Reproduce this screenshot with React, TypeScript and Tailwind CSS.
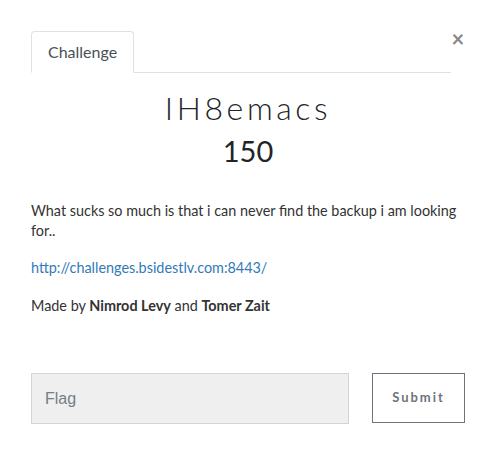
import React from "react";

export default function App() {
  return (
    <div className="w-[495px] h-[473px] bg-white" style={{ fontFamily: "Lato, 'Open Sans', sans-serif" }}>
      <div className="pl-[31px] pt-[31px] w-[465px]">
        <div className="flex items-start">
          <div className="flex w-[420px] border-b border-[#dee2e6]">
            <div className="-mb-px h-[42px] px-[16px] flex items-center border border-[#dee2e6] border-b-white rounded-t-[4px] bg-white text-[16px] text-[#495057]">
              Challenge
            </div>
          </div>
          <div className="flex-1 flex justify-center -mt-[2px] text-[22px] leading-[20px] font-bold text-[#888]">×</div>
        </div>
        <div className="pt-[16px] text-center">
          <div className="text-[32px] leading-[38px] font-light tracking-[3.6px] text-[#212529]">IH8emacs</div>
          <div className="text-[29px] leading-[48px] text-[#212529]">150</div>
        </div>
        <div className="pt-[26px] text-[14.4px] leading-[20px] text-[#333]">
          <p className="mb-[17px]">What sucks so much is that i can never find the backup i am looking for..</p>
          <p className="mb-[18px]"><a className="text-[#337ab7]">http://challenges.bsidestlv.com:8443/</a></p>
          <p>Made by <b>Nimrod Levy</b> and <b>Tomer Zait</b></p>
        </div>
        <div className="mt-[57px] flex items-start gap-[23px]">
          <div className="w-[318px] h-[51px] border border-[#d2d4d8] bg-[#efefef] flex items-center pl-[13px] text-[16px] text-[#757d85]" style={{ fontFamily: "'Liberation Sans', Arial, sans-serif" }}>
            Flag
          </div>
          <div className="w-[93px] h-[50px] border border-[#6c757d] flex items-center justify-center text-[13px] font-bold tracking-[2px] text-[#6c757d]">
            Submit
          </div>
        </div>
      </div>
    </div>
  );
}
